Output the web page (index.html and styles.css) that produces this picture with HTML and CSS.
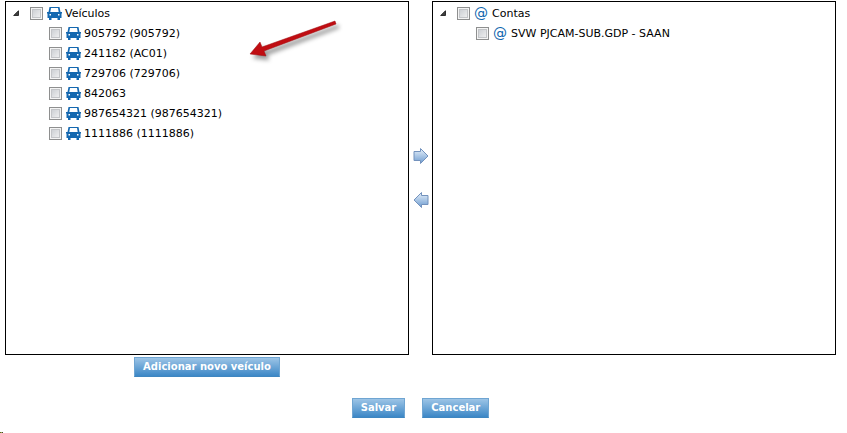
FILE: index.html
```html
<!DOCTYPE html>
<html lang="pt-BR">
<head>
    <meta charset="UTF-8">
    <meta name="viewport" content="width=device-width, initial-scale=1.0">
    <title>Veículos e Contas</title>
    <link rel="stylesheet" href="styles.css">
</head>
<body>
    <!-- shared icons -->
    <svg class="sprite" aria-hidden="true">
        <symbol id="car" viewBox="0 0 15 13">
            <path fill="#1468b0" fill-rule="evenodd" d="M2.500 0h10l1 5H15v1.500h-.5V11H13v2h-2.500v-2h-6v2H2v-2H.5V6.500H0V5h1.500zM4 1L3.300 5h8.400L11 1zM2.500 7v1.500H4V7zM11 7v1.500h1.500V7z"/>
        </symbol>
        <symbol id="open" viewBox="0 0 6 6">
            <path fill="#404040" stroke="#111" stroke-width=".8" d="M5.500.7v4.800H.7z"/>
        </symbol>
        <symbol id="move" viewBox="0 0 16 18">
            <path fill="url(#blue)" stroke="#7392bd" d="M1 4.500h6.500v-3L15 9l-7.500 7.500v-3H1z"/>
        </symbol>
        <symbol id="move-back" viewBox="0 0 16 18">
            <path fill="url(#blue)" stroke="#7392bd" d="M15 4.500H8.500v-3L1 9l7.500 7.500v-3H15z"/>
        </symbol>
        <linearGradient id="blue" x1="0" y1="0" x2="0" y2="1">
            <stop offset="0" stop-color="#e8f1fa"/>
            <stop offset="1" stop-color="#6c9bd0"/>
        </linearGradient>
    </svg>

    <form class="page">
        <div class="lists">
            <div class="panel">
                <div class="row">
                    <button type="button" class="toggle" aria-label="Recolher Veículos"><svg><use href="#open"/></svg></button>
                    <input type="checkbox" id="veiculos">
                    <label for="veiculos"><svg class="car"><use href="#car"/></svg><span>Veículos</span></label>
                </div>
                <div class="row child">
                    <input type="checkbox" id="v1">
                    <label for="v1"><svg class="car"><use href="#car"/></svg><span>905792 (905792)</span></label>
                </div>
                <div class="row child">
                    <input type="checkbox" id="v2">
                    <label for="v2"><svg class="car"><use href="#car"/></svg><span>241182 (AC01)</span></label>
                </div>
                <div class="row child">
                    <input type="checkbox" id="v3">
                    <label for="v3"><svg class="car"><use href="#car"/></svg><span>729706 (729706)</span></label>
                </div>
                <div class="row child">
                    <input type="checkbox" id="v4">
                    <label for="v4"><svg class="car"><use href="#car"/></svg><span>842063</span></label>
                </div>
                <div class="row child">
                    <input type="checkbox" id="v5">
                    <label for="v5"><svg class="car"><use href="#car"/></svg><span>987654321 (987654321)</span></label>
                </div>
                <div class="row child">
                    <input type="checkbox" id="v6">
                    <label for="v6"><svg class="car"><use href="#car"/></svg><span>1111886 (1111886)</span></label>
                </div>

                <svg class="pointer" viewBox="0 0 100 50" aria-hidden="true">
                    <path fill="#c00d12" stroke="#9c0a0e" stroke-width=".5" d="M4 37l10-12 2 5L89 4l1 3L18 34l2 5z"/>
                </svg>
            </div>

            <div class="moves">
                <button type="button" aria-label="Mover para a direita"><svg><use href="#move"/></svg></button>
                <button type="button" aria-label="Mover para a esquerda"><svg><use href="#move-back"/></svg></button>
            </div>

            <div class="panel">
                <div class="row">
                    <button type="button" class="toggle" aria-label="Recolher Contas"><svg><use href="#open"/></svg></button>
                    <input type="checkbox" id="contas">
                    <label for="contas"><span class="at">@</span><span>Contas</span></label>
                </div>
                <div class="row child">
                    <input type="checkbox" id="c1">
                    <label for="c1"><span class="at">@</span><span>SVW PJCAM-SUB.GDP - SAAN</span></label>
                </div>
            </div>

            <div class="add">
                <button type="button" class="btn">Adicionar novo veículo</button>
            </div>
        </div>

        <div class="actions">
            <button type="submit" class="btn">Salvar</button>
            <button type="button" class="btn">Cancelar</button>
        </div>
    </form>
    <div class="corner"></div>
</body>
</html>
```
FILE: styles.css
```css
* {
    box-sizing: border-box;
}
body {
    margin: 0;
    background: #fff;
    color: #000;
    font: 11px/20px Verdana, "DejaVu Sans", sans-serif;
}
button {
    font: inherit;
    cursor: pointer;
}
svg {
    display: block;
}
.sprite {
    position: absolute;
    width: 0;
    height: 0;
}
.page {
    padding: 1px 11px 0 5px;
}
.lists {
    display: grid;
    grid-template-columns: 1fr 23px 1fr;
    row-gap: 2px;
}
.panel {
    position: relative;
    min-height: 354px;
    padding: 1px 6px;
    border: 1px solid #000;
}

/* tree */
.row {
    display: flex;
    align-items: center;
    height: 20px;
}
.row.child {
    padding-left: 37px;
}
.row label {
    display: flex;
    align-items: center;
    margin-left: 4px;
    line-height: 18px;
    white-space: nowrap;
}
.row label span {
    padding-top: 2px;
}
.toggle {
    width: 18px;
    height: 20px;
    padding: 0 1px;
    border: none;
    background: none;
}
.toggle svg {
    width: 6px;
    height: 6px;
}
input[type="checkbox"] {
    appearance: none;
    width: 13px;
    height: 13px;
    margin: 0;
    border: 1px solid #8e8f8f;
    background: linear-gradient(135deg, #c4c8cd, #f6f6f6);
    box-shadow: inset 0 0 0 1px #f4f4f4, inset 0 0 0 2px #c3c5c8;
}
input[type="checkbox"]:checked {
    background: #1468b0;
}
.car {
    width: 15px;
    height: 13px;
    margin-right: 3px;
}
.row label .at {
    width: 15px;
    margin-right: 3px;
    padding: 0;
    color: #0f66ae;
    font-size: 14px;
}

/* red arrow over the list */
.pointer {
    position: absolute;
    top: 15px;
    left: 240px;
    width: 100px;
    height: 50px;
    filter: drop-shadow(3px 4px 2px rgba(0, 0, 0, 0.4));
}

.moves {
    display: flex;
    flex-direction: column;
    align-items: center;
    justify-content: center;
    gap: 26px;
}
.moves button {
    padding: 0;
    border: none;
    background: none;
}
.moves svg {
    width: 16px;
    height: 18px;
}

.btn {
    height: 20px;
    padding: 0 8px;
    border: 1px solid #6fa5d2;
    border-bottom-color: #3f86c0;
    background: linear-gradient(#9cc4e6, #3c87c6);
    color: #fff;
    font-size: 10px;
    font-weight: bold;
    line-height: 18px;
    white-space: nowrap;
}
.add {
    text-align: center;
    line-height: 0;
}
.actions {
    display: flex;
    justify-content: center;
    gap: 17px;
    margin-top: 21px;
}
.corner {
    position: fixed;
    bottom: 0;
    left: 0;
    width: 3px;
    height: 1px;
    background: linear-gradient(90deg, #3a4a10, #9aa84a, #101030);
}
```
